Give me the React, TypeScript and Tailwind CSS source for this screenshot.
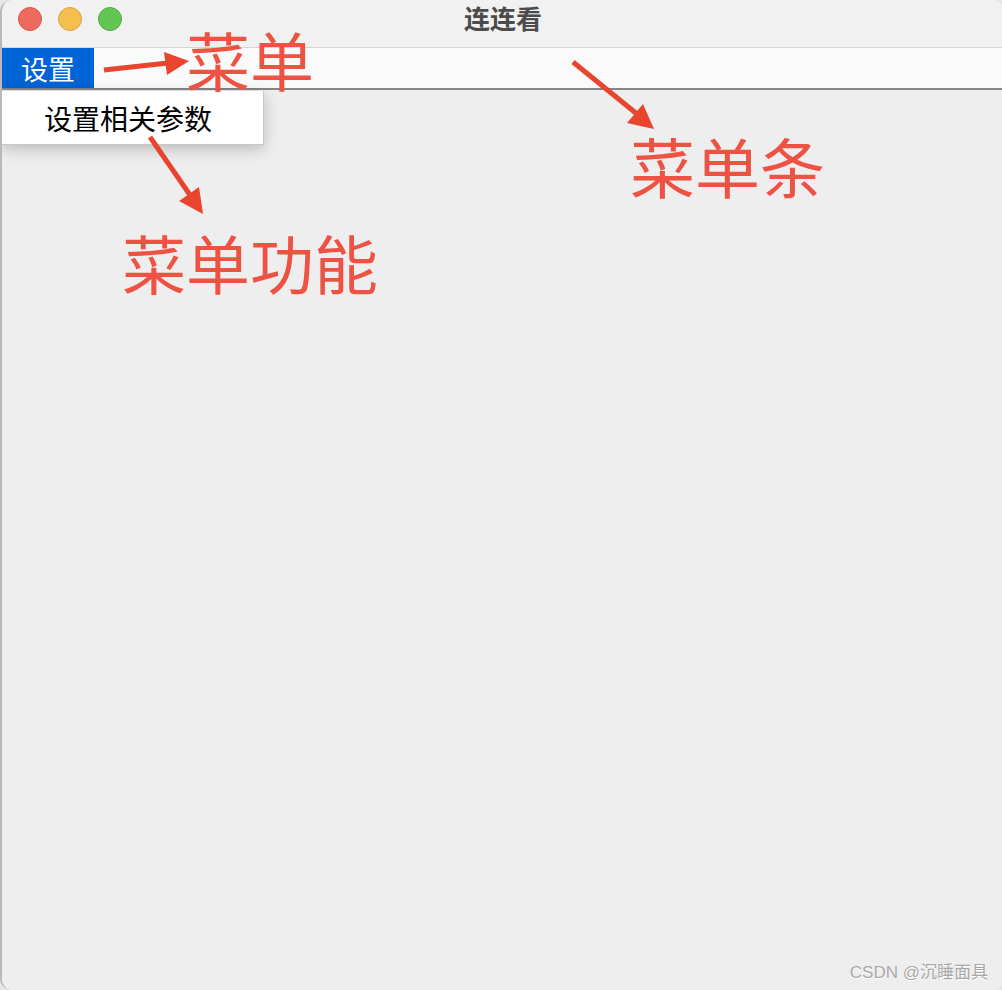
import React from "react";

const cjk = { fontFamily: '"Noto Sans CJK SC", "Noto Sans", sans-serif' };

export default function App() {
  return (
    <div className="relative w-[1002px] h-[990px] overflow-hidden bg-[#e6e6e6]" style={cjk}>
      <div className="flex flex-col w-[1004px] h-[990px] rounded-[12px] overflow-hidden border-l-2 border-[#b9b9b9] bg-[#eeeeee]">
        {/* Title bar */}
        <div className="relative h-[47px] shrink-0 bg-[#f1f1f1] flex items-center">
          <div className="flex gap-[16px] pl-[16px] pb-[10px]">
            <span className="w-[24px] h-[24px] rounded-full bg-[#ee6a5e] border border-[#d65749]" />
            <span className="w-[24px] h-[24px] rounded-full bg-[#f5bf4f] border border-[#d9a23c]" />
            <span className="w-[24px] h-[24px] rounded-full bg-[#62c554] border border-[#52a945]" />
          </div>
          <div className="absolute inset-0 flex items-center justify-center pb-[12px]">
            <span className="text-[26px] font-bold text-[#4b4b4b] leading-none">连连看</span>
          </div>
        </div>
        {/* Menu bar */}
        <div className="h-[43px] shrink-0 flex bg-[#fafafa] border-t border-[#d6d6d6] border-b-2 border-b-[#858585]">
          <div className="w-[92px] h-full bg-[#0063d6] flex items-center justify-center">
            <span className="text-white text-[27px] leading-none">设置</span>
          </div>
        </div>
        {/* Content */}
        <div className="relative flex-1 bg-[#eeeeee]">
          <div className="absolute left-0 top-[1px] w-[262px] h-[54px] bg-white flex items-center pl-[42px] shadow-[0_4px_14px_rgba(0,0,0,0.22)] border-r border-b border-[#c8c8c8]">
            <span className="text-[28px] text-black leading-none">设置相关参数</span>
          </div>
          <div className="absolute right-[16px] bottom-[9px] text-[17px] text-[#a8a8a8] leading-none" style={{ fontFamily: '"Liberation Sans", "Noto Sans CJK SC", sans-serif', textShadow: "0 1px 0 #ffffff" }}>
            CSDN @沉睡面具
          </div>
        </div>
      </div>

      {/* Annotations */}
      <svg className="absolute inset-0 pointer-events-none" width="1002" height="990">
        <line x1="104" y1="70" x2="168" y2="63" stroke="#e9442e" strokeWidth="5" />
        <polygon points="164,52 167,75 189,61" fill="#e9442e" />
        <line x1="573" y1="62" x2="637" y2="114" stroke="#e9442e" strokeWidth="5" />
        <polygon points="627,123 643,104 654,129" fill="#e9442e" />
        <line x1="150" y1="137" x2="190" y2="195" stroke="#e9442e" strokeWidth="5" />
        <polygon points="179,201 199,187 203,214" fill="#e9442e" />
      </svg>
      <div className="absolute left-[186px] top-[26px] text-[64px] leading-[64px] text-[#ee5242]">菜单</div>
      <div className="absolute left-[630px] top-[133px] text-[65px] leading-[64px] text-[#ee5242]">菜单条</div>
      <div className="absolute left-[122px] top-[229px] text-[64px] leading-[64px] text-[#ee5242]">菜单功能</div>
    </div>
  );
}
